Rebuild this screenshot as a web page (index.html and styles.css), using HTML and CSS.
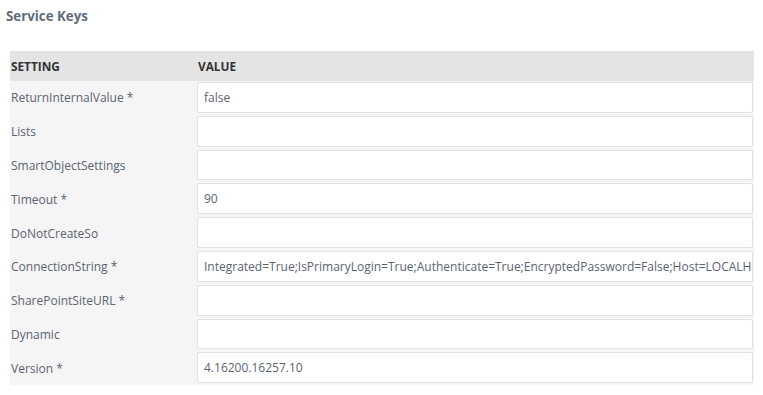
FILE: index.html
```html
<!DOCTYPE html>
<html>
<head>
<meta charset="utf-8">
<link rel="stylesheet" href="styles.css">
</head>
<body>
<h1 class="title">Service Keys</h1>
<div class="table">
  <div class="head">
    <div class="hcell">SETTING</div>
    <div class="hcell">VALUE</div>
  </div>
  <div class="row"><div class="label">ReturnInternalValue *</div><div class="val"><div class="input">false</div></div></div>
  <div class="row"><div class="label">Lists</div><div class="val"><div class="input"></div></div></div>
  <div class="row"><div class="label">SmartObjectSettings</div><div class="val"><div class="input"></div></div></div>
  <div class="row"><div class="label">Timeout *</div><div class="val"><div class="input">90</div></div></div>
  <div class="row"><div class="label">DoNotCreateSo</div><div class="val"><div class="input"></div></div></div>
  <div class="row"><div class="label">ConnectionString *</div><div class="val"><div class="input">Integrated=True;IsPrimaryLogin=True;Authenticate=True;EncryptedPassword=False;Host=LOCALH</div></div></div>
  <div class="row"><div class="label">SharePointSiteURL *</div><div class="val"><div class="input"></div></div></div>
  <div class="row"><div class="label">Dynamic</div><div class="val"><div class="input"></div></div></div>
  <div class="row last"><div class="label">Version *</div><div class="val"><div class="input">4.16200.16257.10</div></div></div>
</div>
</body>
</html>
```

FILE: styles.css
```css
html, body {
  margin: 0;
  padding: 0;
  background: #fff;
  font-family: "Open Sans", "Liberation Sans", sans-serif;
}
.title {
  margin: 0;
  padding: 6px 0 0 6px;
  height: 45px;
  box-sizing: border-box;
  font-size: 13.3px;
  font-weight: 700;
  color: #5e6b78;
  line-height: 20px;
}
.table {
  margin: 6px 9px 0 10px;
}
.head {
  display: grid;
  grid-template-columns: 187px minmax(0, 1fr);
  height: 30px;
  background: #e4e4e4;
  align-items: center;
}
.hcell {
  font-size: 11.8px;
  font-weight: 700;
  color: #333;
  padding-left: 1px;
}
.hcell + .hcell { padding-left: 1px; }
.row {
  display: grid;
  grid-template-columns: 187px minmax(0, 1fr);
  height: 33.8px;
  background: #f5f5f5;
}
.row.last { border-bottom-left-radius: 4px; }
.label {
  display: flex;
  align-items: center;
  padding-left: 1px;
  font-size: 12px;
  color: #5b6470;
  white-space: nowrap;
}
.val {
  padding: 1px 1px 2px 0;
  display: flex;
  min-width: 0;
}
.input {
  flex: 1;
  background: #fff;
  border: 1px solid #e2e2e2;
  border-radius: 2px;
  box-sizing: border-box;
  padding: 0 6px;
  display: flex;
  align-items: center;
  font-size: 12px;
  color: #5b6470;
  white-space: nowrap;
  overflow: hidden;
  min-width: 0;
}
```
